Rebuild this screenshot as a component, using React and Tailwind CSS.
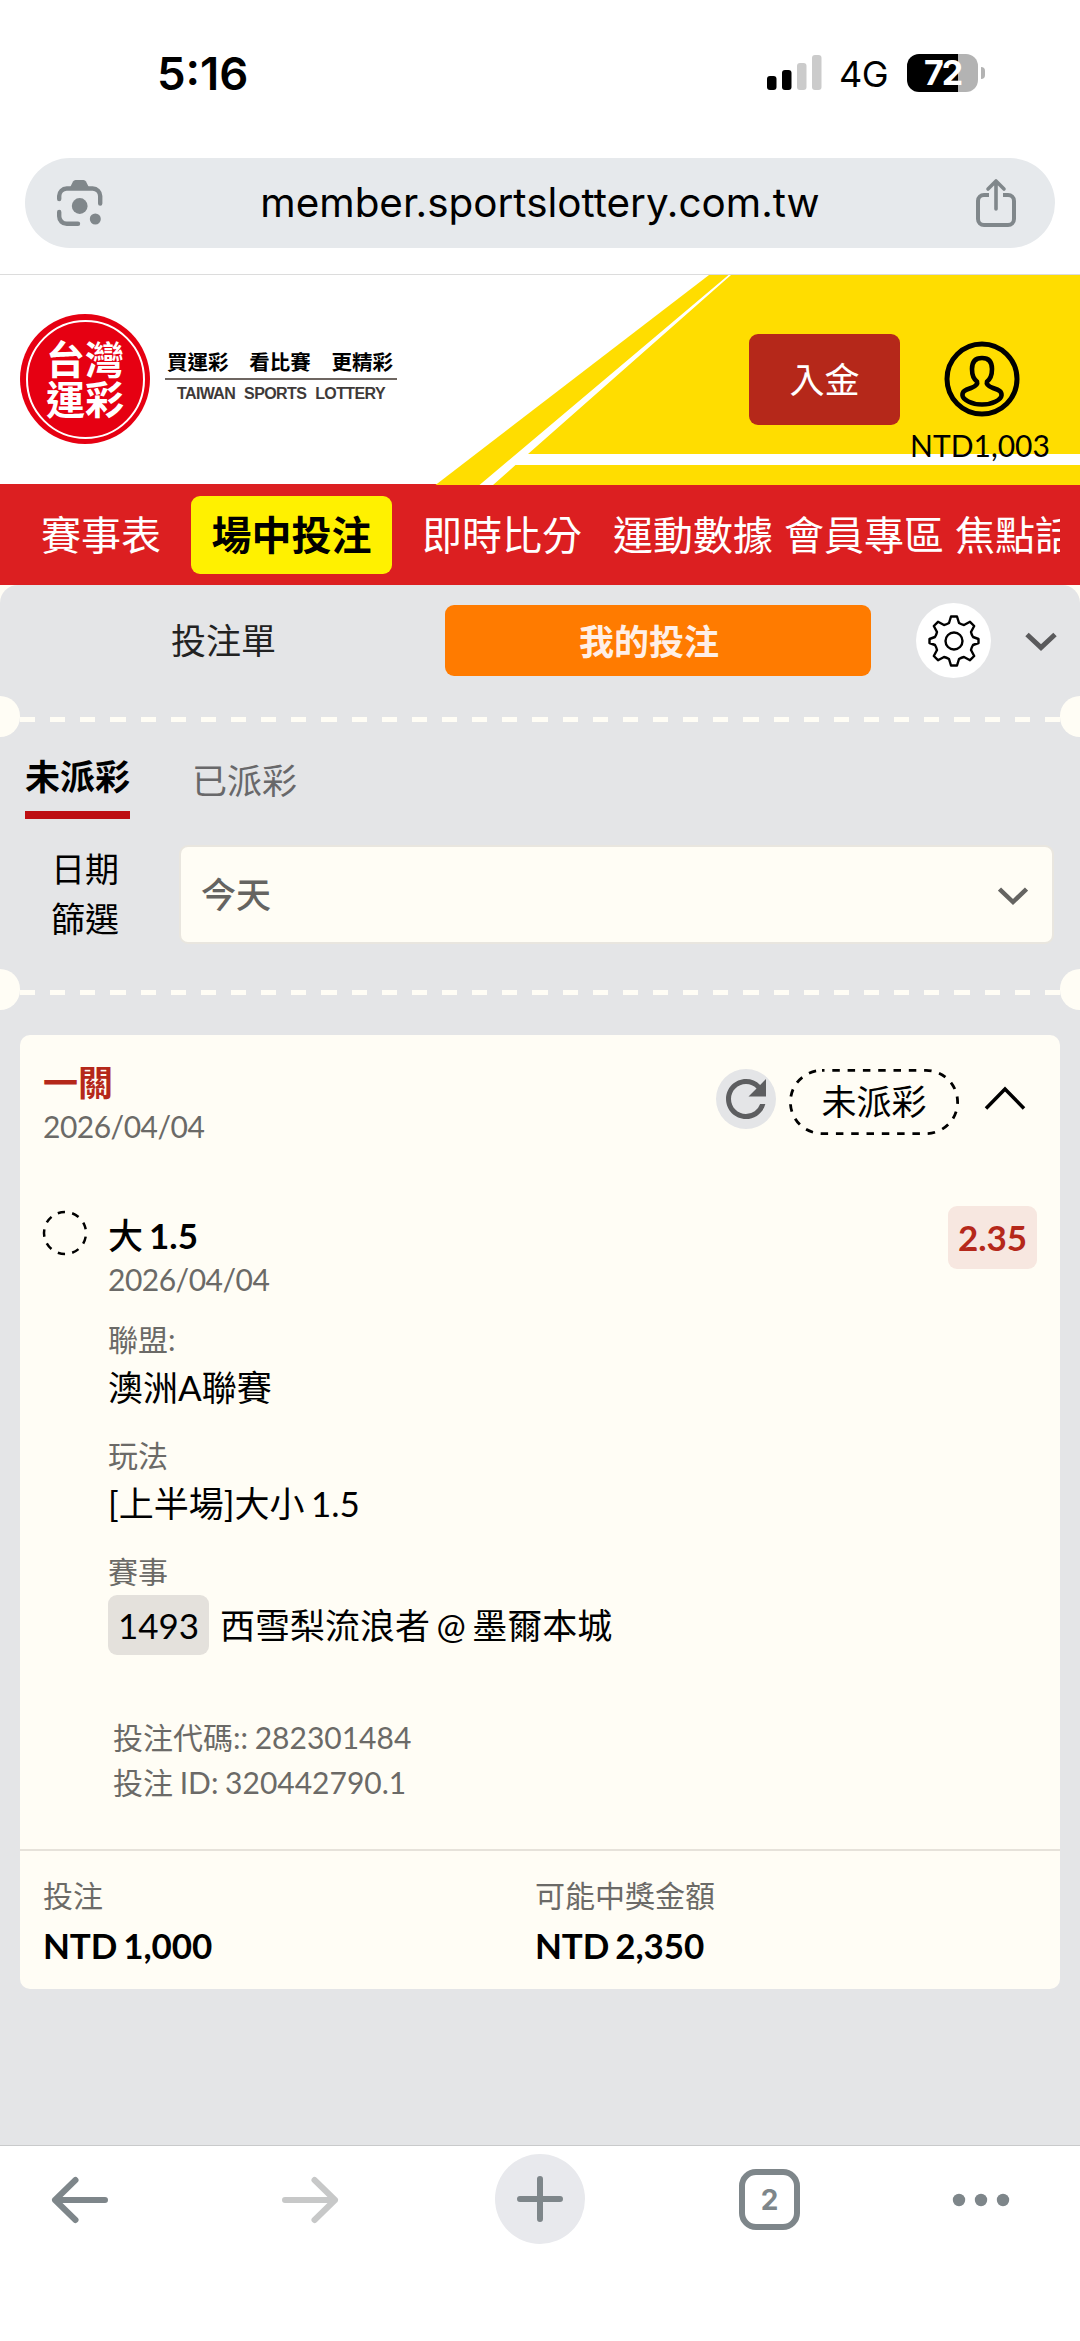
import React from 'react';
import { MdRefresh } from 'react-icons/md';

const navItems = [
  { label: '賽事表', className: 'ml-[41px]' },
  { label: '場中投注', active: true, className: 'ml-[30px]' },
  { label: '即時比分', className: 'ml-[30px]' },
  { label: '運動數據', className: 'ml-[31px]' },
  { label: '會員專區', className: 'ml-[11px]' },
  { label: '焦點話題', className: 'ml-[11px]' },
];

function StatusBar() {
  return (
    <div className="flex h-[148px] items-center justify-between pl-[157px] pr-[95px] font-['Inter',sans-serif] text-black">
      <span className="-mt-px text-[45.5px] font-semibold leading-none">5:16</span>
      <div className="flex items-center">
        <svg width="56" height="36" viewBox="0 0 56 36" className="-mt-[3px]">
          <rect x="0" y="21" width="9.5" height="14" rx="3" fill="#000" />
          <rect x="15" y="15" width="9.5" height="20" rx="3" fill="#000" />
          <rect x="30" y="8" width="9.5" height="27" rx="3" fill="#cbcbcb" />
          <rect x="45" y="0" width="9.5" height="35" rx="3" fill="#cbcbcb" />
        </svg>
        <span className="ml-4 w-[52px] whitespace-nowrap text-[36px] leading-none tracking-[-0.5px]">4G</span>
        <div className="ml-4 -mt-[3px] flex items-center">
          <div className="flex h-[38px] w-[71px] items-center justify-center rounded-[12px] bg-[linear-gradient(90deg,#000_72%,#b3b3b3_72%)] text-[34px] font-bold leading-none tracking-[-2px] text-white">
            72
          </div>
          <div className="ml-[3px] h-3 w-1 rounded-r-full bg-[#b3b3b3]" />
        </div>
      </div>
    </div>
  );
}

function AddressBar() {
  return (
    <div className="px-[25px] pt-[10px]">
      <div className="flex h-[90px] items-center justify-between rounded-full bg-[#e6e9ec] pl-[31px] pr-[37px]">
        <svg width="48" height="48" viewBox="0 0 48 48" fill="none" stroke="#80878b" strokeWidth="4.4" strokeLinecap="round">
          <path d="M3.200 20v-3a7.500 7.500 0 0 1 7.500-7.500h26a7.500 7.500 0 0 1 7.500 7.500v7.500" />
          <path d="M3.200 33v4.300a7.500 7.500 0 0 0 7.500 7.500H22" />
          <path d="M14 8.500l3-6a3 3 0 0 1 2.500-1.500h8a3 3 0 0 1 2.500 1.500l3 6z" fill="#80878b" stroke="none" />
          <circle cx="23.700" cy="27" r="7.900" fill="#80878b" stroke="none" />
          <circle cx="39.300" cy="40" r="5.500" fill="#80878b" stroke="none" />
        </svg>
        <span className="pl-[2px] font-['Inter',sans-serif] text-[40.4px] leading-none text-black">member.sportslottery.com.tw</span>
        <svg width="44" height="50" viewBox="0 0 44 50" fill="none" stroke="#80878b" strokeWidth="4" strokeLinecap="round" strokeLinejoin="round">
          <path d="M15 17h-5a6 6 0 0 0-6 6v18a6 6 0 0 0 6 6h24a6 6 0 0 0 6-6V23a6 6 0 0 0-6-6h-5" strokeLinecap="butt" />
          <path d="M22 31V4M14 11l8-8 8 8" strokeWidth="3.600" />
        </svg>
      </div>
    </div>
  );
}

function Header() {
  return (
    <header className="relative mt-[26px] h-[210px] border-t border-[#dcdcdc] bg-white">
      <svg width="1080" height="210" viewBox="0 0 1080 210" className="absolute left-0 top-0">
        <path d="M709 0H1080V210H435.500z" fill="#ffdd00" />
        <path d="M728.500 0H731L528 179H1080V190H515.500L493 210H479.500z" fill="#fff" />
      </svg>
      <div className="relative flex h-full">
        <div className="ml-5 mt-[39px] flex size-[130px] items-center justify-center rounded-full bg-[#e60012]">
          <div className="flex size-[119px] flex-col items-center justify-center rounded-full border-2 border-white pb-[4px] font-['Noto_Sans_CJK_TC',sans-serif] text-[39px] font-bold leading-[40px] text-white">
            <span>台灣</span>
            <span>運彩</span>
          </div>
        </div>
        <div className="ml-[15px] mt-[73px] w-[232px] text-center">
          <div className="flex justify-between border-b-2 border-[#6e6661] pl-[2px] pr-1 pb-1 font-['Noto_Sans_CJK_TC',sans-serif] text-[20.5px] font-bold leading-[26px] text-black">
            <span>買運彩</span>
            <span>看比賽</span>
            <span>更精彩</span>
          </div>
          <div className="mt-[4px] whitespace-nowrap font-['Liberation_Sans',sans-serif] text-[16px] font-bold leading-5 tracking-[-0.6px] text-[#3e3a39] [word-spacing:5px]">
            TAIWAN SPORTS LOTTERY
          </div>
        </div>
        <button className="ml-[352px] mt-[59px] h-[91px] w-[151px] rounded-[9px] bg-[#b5281a] text-[35px] leading-none text-white">入金</button>
        <div className="ml-[10px] mt-[66px] flex w-[140px] flex-col items-center">
          <svg width="76" height="76" viewBox="0 0 76 76" fill="none" stroke="#000" strokeWidth="5" className="ml-[3px]">
            <circle cx="38" cy="38" r="35" />
            <path d="M38 17c-7 0-10 4-10 11 0 6 1.500 10 5 12.500 1 3-2 5-6 6.500-5 1.800-9 3-8.500 7.500 .5 4 8.500 9 19.500 9s19-5 19.500-9c.5-4.500-3.500-5.700-8.500-7.500-4-1.500-7-3.500-6-6.500 3.500-2.500 5-6.500 5-12.500 0-7-3-11-10-11z" strokeWidth="4.600" strokeLinejoin="round" />
          </svg>
          <span className="mt-[10px] whitespace-nowrap text-[30px] leading-9 text-black">NTD1,003</span>
        </div>
      </div>
    </header>
  );
}

function Nav() {
  return (
    <nav className="h-[101px] bg-[#dc1f21] pr-5">
      <div className="flex h-full items-center overflow-hidden text-[40px] leading-none text-white">
        {navItems.map(({ label, active, className }) => (
          <div key={label} className={`${className} shrink-0 whitespace-nowrap`}>
            {active ? (
              <div className="flex h-[78px] w-[201px] items-center justify-center rounded-[9px] bg-[#fff100] font-bold text-black">
                {label}
              </div>
            ) : (
              label
            )}
          </div>
        ))}
      </div>
    </nav>
  );
}

// Perforated ticket edge: two notches joined by a dashed line
function TicketDivider() {
  return (
    <div className="flex h-[41px] items-center">
      <div className="h-[41px] w-5 rounded-r-full bg-[#fffdf5]" />
      <div className="mt-[5px] h-[5px] flex-1 bg-[repeating-linear-gradient(90deg,#fffdf5_0,#fffdf5_15.07px,transparent_15.07px,transparent_30.145px)]" />
      <div className="h-[41px] w-5 rounded-l-full bg-[#fffdf5]" />
    </div>
  );
}

function GearIcon() {
  return (
    <svg width="52" height="52" viewBox="0 0 52 52" fill="none" stroke="#000" strokeWidth="2.400" strokeLinejoin="round">
      <path d="M23 1.500h6l2 6.500q2.500 1.500 5 2l6-3.200 4.200 4.200-3.200 6q.5 2.500 2 5l5.500 2v4l-5.500 2q-1.500 2.500-2 5l3.200 6-4.200 4.200-6-3.200q-2.500.5-5 2l-2 6.500h-6l-2-6.500q-2.500-1.500-5-2l-6 3.200-4.200-4.200 3.200-6q-.5-2.500-2-5l-5.500-2v-4l5.500-2q1.500-2.500 2-5l-3.200-6 4.200-4.200 6 3.200q2.500-.5 5-2z" />
      <circle cx="26" cy="26" r="8.500" />
    </svg>
  );
}

function BetTabs() {
  return (
    <div className="flex h-[111px] items-start pt-[20px] text-[35px]">
      <div className="h-[71px] w-[445px] pl-[2px] text-center leading-[71px] text-[#222]">投注單</div>
      <div className="h-[71px] w-[426px] rounded-[9px] bg-[#ff7b00] pr-[18px] text-center font-['Noto_Sans_CJK_TC',sans-serif] font-semibold leading-[69px] text-[#ffefe6]">我的投注</div>
      <div className="ml-[45px] -mt-[2px] flex size-[75px] items-center justify-center rounded-full bg-white">
        <GearIcon />
      </div>
      <svg width="32" height="20" viewBox="0 0 32 20" fill="none" stroke="#5a5a5c" strokeWidth="5" className="ml-[34px] mt-[27px]">
        <path d="M2 2.500l14 13 14-13" />
      </svg>
    </div>
  );
}

function Filters() {
  return (
    <div className="h-[232px] pt-[14px]">
      <div className="flex pl-[25px] text-[35px]">
        <div className="h-[68px] w-[105px] border-b-8 border-[#bd0e12] text-center font-bold leading-[50px] text-black">未派彩</div>
        <div className="ml-[62px] leading-[58px] text-[#68686a]">已派彩</div>
      </div>
      <div className="mt-[25px] flex items-center">
        <div className="ml-[51px] w-[70px] text-[34px] leading-[50px] text-black">
          <div>日期</div>
          <div>篩選</div>
        </div>
        <div className="ml-[58px] flex h-[99px] w-[875px] items-center justify-between rounded-[9px] border-2 border-[#e9e6df] bg-[#fffdf5] pl-[20px] pr-[24px]">
          <span className="text-[35px] font-medium leading-none text-[#656461]">今天</span>
          <svg width="30" height="20" viewBox="0 0 30 20" fill="none" stroke="#656461" strokeWidth="4.500" className="mt-[4px]">
            <path d="M1.500 3L15 16 28.500 3" />
          </svg>
        </div>
      </div>
    </div>
  );
}

function Field({ label, children }) {
  return (
    <div className="mb-5">
      <div className="text-[30px] leading-[45px] text-[#6b6a67]">{label}</div>
      <div className="text-[35px] leading-[51px] text-black">{children}</div>
    </div>
  );
}

function BetCard() {
  return (
    <section className="mx-5 h-[954px] rounded-[10px] bg-[#fffdf5] pt-[25px]">
      <div className="flex h-[153px] pl-[23px]">
        <div className="w-[673px]">
          <div className="text-[35px] font-bold leading-[44px] text-[#b5281a]">一關</div>
          <div className="text-[30px] leading-[44px] tracking-[-0.5px] text-[#6b6a67]">2026/04/04</div>
        </div>
        <div className="mt-[9px] flex size-[60px] items-center justify-center rounded-full bg-[#e4e5e7]">
          <MdRefresh size={60} color="#5d5e60" />
        </div>
        <div className="relative ml-[13px] mt-[9px] h-[66px] w-[170px] text-center text-[35px] leading-[64px] text-black">
          <svg width="170" height="66" viewBox="0 0 170 66" className="absolute left-0 top-0" fill="none" stroke="#000" strokeWidth="2.800">
            <rect x="1.400" y="1.400" width="167.200" height="63.200" rx="31.600" strokeDasharray="7.500 7.800" strokeDashoffset="5" />
          </svg>
          未派彩
        </div>
        <svg width="42" height="26" viewBox="0 0 42 26" fill="none" stroke="#000" strokeWidth="3.500" className="ml-[25px] mt-[25px]">
          <path d="M2 23.500L21 4l19 19.500" />
        </svg>
      </div>

      <div className="flex h-[636px] pl-[22px]">
        <svg width="46" height="46" viewBox="0 0 46 46" fill="none" stroke="#000" strokeWidth="2.500" className="-mt-[3px]">
          <circle cx="23" cy="23" r="21" pathLength="360" strokeDasharray="20 20" strokeDashoffset="-10" transform="rotate(160 23 23)" />
        </svg>
        <div className="ml-5 flex-1 [word-spacing:-2.500px]">
          <div className="text-[35px] font-bold leading-[44px] text-black">
            <span className="font-medium">大</span> 1.5
          </div>
          <div className="mb-[16px] text-[30px] leading-[44px] tracking-[-0.5px] text-[#6b6a67]">2026/04/04</div>
          <Field label="聯盟:">澳洲A聯賽</Field>
          <Field label="玩法">[上半場]大小 1.5</Field>
          <div className="text-[30px] leading-[45px] text-[#6b6a67]">賽事</div>
          <div className="mt-px flex h-[60px] items-center text-[35px] text-black">
            <span className="h-[60px] w-[101px] rounded-[9px] bg-[#e4e1dc] text-center leading-[60px]">1493</span>
            <span className="ml-[11px] leading-[60px]">西雪梨流浪者 @ 墨爾本城</span>
          </div>
          <div className="mt-[60px] pl-[5px] text-[30px] leading-[45px] text-[#6b6a67] [word-spacing:-1px]">
            <div>投注代碼:: 282301484</div>
            <div>投注 ID: 320442790.1</div>
          </div>
        </div>
        <div className="-mt-[7px] mr-[23px] h-[63px] w-[89px] rounded-[9px] bg-[#f7e7e0] text-center text-[35px] font-bold leading-[63px] text-[#b5281a]">2.35</div>
      </div>

      <div className="flex border-t-2 border-[#e6e2da] pl-[23px] pt-[19px] [word-spacing:-2.500px]">
        <div className="w-[492px]">
          <div className="text-[30px] leading-[50px] text-[#6b6a67]">投注</div>
          <div className="text-[35px] font-bold leading-[50px] tracking-[-0.1px] text-black">NTD 1,000</div>
        </div>
        <div>
          <div className="text-[30px] leading-[50px] text-[#6b6a67]">可能中獎金額</div>
          <div className="text-[35px] font-bold leading-[50px] tracking-[-0.1px] text-black">NTD 2,350</div>
        </div>
      </div>
    </section>
  );
}

function BottomBar() {
  return (
    <div className="flex h-[196px] items-start border-t border-[#c9cacb] bg-white pl-[50px]">
      <svg width="60" height="50" viewBox="0 0 60 50" fill="none" stroke="#7e868a" strokeWidth="6" strokeLinecap="round" strokeLinejoin="round" className="mt-[29px]">
        <path d="M55 25H5M25.500 5L5 25l20.500 20" />
      </svg>
      <svg width="60" height="50" viewBox="0 0 60 50" fill="none" stroke="#c7c8c8" strokeWidth="6" strokeLinecap="round" strokeLinejoin="round" className="ml-[170px] mt-[29px]">
        <path d="M5 25h50M34.500 5L55 25 34.500 45" />
      </svg>
      <div className="ml-[155px] mt-[8px] flex size-[90px] items-center justify-center rounded-full bg-[#e8e9ed]">
        <svg width="50" height="50" viewBox="0 0 50 50" stroke="#7e868a" strokeWidth="6" strokeLinecap="round">
          <path d="M25 5v40M5 25h40" />
        </svg>
      </div>
      <div className="ml-[154px] mt-[23px] flex size-[61px] items-center justify-center rounded-[17px] border-[6px] border-[#7e868a] font-['Inter',sans-serif] text-[28px] font-bold leading-none text-[#7e868a]">
        2
      </div>
      <svg width="60" height="14" viewBox="0 0 60 14" fill="#7e868a" className="ml-[152px] mt-[47px]">
        <circle cx="7" cy="7" r="6.200" />
        <circle cx="29" cy="7" r="6.200" />
        <circle cx="51" cy="7" r="6.200" />
      </svg>
    </div>
  );
}

export default function App() {
  return (
    <div className="flex h-[2341px] w-[1080px] flex-col overflow-hidden bg-white font-['Lato','Noto_Sans_CJK_TC',sans-serif]">
      <StatusBar />
      <AddressBar />
      <Header />
      <Nav />
      <main className="flex-1 bg-[#fffdf5]">
        <div className="h-full rounded-t-[18px] bg-[#e4e5e7]">
          <BetTabs />
          <TicketDivider />
          <Filters />
          <TicketDivider />
          <div className="h-[25px]" />
          <BetCard />
        </div>
      </main>
      <BottomBar />
    </div>
  );
}
